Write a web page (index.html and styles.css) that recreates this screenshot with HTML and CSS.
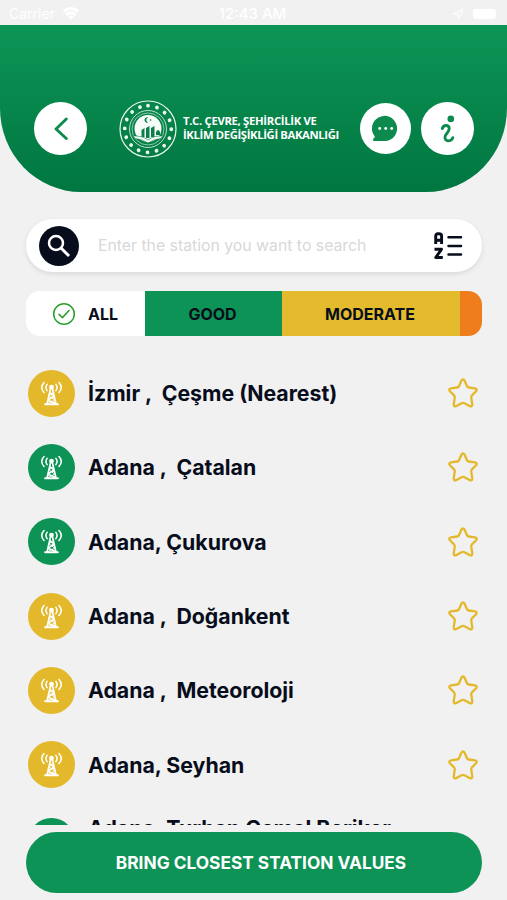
FILE: index.html
```html
<!DOCTYPE html>
<html lang="en">
<head>
<meta charset="utf-8">
<title>Stations</title>
<link rel="stylesheet" href="styles.css">
</head>
<body>
<svg class="defs" width="0" height="0" aria-hidden="true">
  <symbol id="tower" viewBox="0 0 24 26">
    <g fill="none" stroke="#fff" stroke-linecap="round" stroke-linejoin="round">
      <path stroke-width="1.600" d="M7.400 3.500Q5 6.800 7.400 10M16.600 3.500Q19 6.800 16.600 10M4.200 1.500Q-.600 6.700 4.200 12M19.800 1.500Q24.600 6.700 19.800 12"/>
      <path stroke-width="1.700" d="M11 8L7.300 24M13 8L16.700 24M10.300 12L14.500 15.500L8.500 20L16 23.500"/>
      <path stroke-width="1" d="M13.700 12L9.500 15.500L15.500 20L8 23.500"/>
      <path stroke-width="2" d="M5.300 24.300H18.700"/>
    </g>
    <circle cx="12" cy="6.300" r="2.500" fill="#fff"/>
  </symbol>
  <symbol id="star" viewBox="0 0 30 30">
    <path d="M13.500 2.500Q15 .300 16.500 2.500L18.900 8Q19.400 9.300 20.800 9.500L27 10.300Q29.700 11 28.100 13.200L23.900 17.400Q23 18.400 23.300 19.800L24.300 26.300Q24.300 29 22 28.200L16.500 25.200Q15 24.500 13.500 25.200L8 28.200Q5.700 29 5.700 26.300L6.700 19.800Q7 18.400 6.100 17.400L1.900 13.200Q.300 11 3 10.300L9.200 9.500Q10.600 9.300 11.100 8Z" fill="none" stroke="#e3b92b" stroke-width="2.300" stroke-linejoin="round"/>
  </symbol>
</svg>
<div class="status">
  <div class="status-left"><span>Carrier</span>
    <svg width="18" height="14" viewBox="0 0 18 14"><path d="M1.500 4.500Q9-1.500 16.500 4.500M4 8Q9 4 14 8" fill="none" stroke="#fff" stroke-width="2.800"/><path d="M6 9.500Q9 7.500 12 9.500L9 13Z" fill="#fff"/></svg>
  </div>
  <span class="clock">12:43 AM</span>
  <div class="status-right">
    <svg width="12" height="12" viewBox="0 0 12 12"><path d="M1 6L11 1L7 11L6 6Z" fill="none" stroke="#fff"/></svg>
    <span class="battery"></span>
  </div>
</div>
<header class="header">
  <button class="round back" aria-label="Back"><svg width="14" height="24" viewBox="0 0 14 24"><path d="M12.300 2L2 12L12.300 21.500" fill="none" stroke="#0d8a4e" stroke-width="2.900" stroke-linecap="round" stroke-linejoin="round"/></svg></button>
  <div class="brand">
    <svg width="58" height="58" viewBox="0 0 58 58">
      <g fill="none" stroke="#e8f6ee">
        <circle cx="29" cy="29" r="28" stroke-width="1.200"/>
        <circle cx="29" cy="29" r="18.500" stroke-width=".8"/>
        <circle cx="29" cy="29" r="16" stroke="#8cc9a8" stroke-width="1"/>
        <circle cx="29" cy="29" r="23.300" stroke-width="3.800" stroke-linecap="round" stroke-dasharray=".01 9.140" transform="rotate(-90 29 29)"/>
      </g>
      <circle cx="29" cy="28.500" r="13.500" fill="#f7fcf9"/>
      <path d="M29.500 17.800A2.600 2.600 0 1 0 29.500 22.200A2.200 2.200 0 1 1 29.500 17.800" fill="#0a8048"/>
      <path d="M31.500 19L32.500 20L31.500 21L30.700 20Z" fill="#0a8048"/>
      <path d="M22.500 30L25.500 28V37H22.500ZM27 28L30.500 26V38H27ZM32 28L35.500 26V37H32ZM37 32Q39 28 41 32V35H37Z" fill="#0a8048"/>
      <path d="M14 36Q23 35.500 29 40Q35 35.500 44 36L42 38.500Q35 39 29 43Q23 39 16 38.500Z" fill="#f7fcf9" stroke="#0a8048" stroke-width=".6"/>
    </svg>
    <div class="brand-name"><span class="line-one">T.C. ÇEVRE, ŞEHİRCİLİK VE</span><span class="line-two">İKLİM DEĞİŞİKLİĞİ BAKANLIĞI</span></div>
  </div>
  <button class="round chat" aria-label="Messages"><svg width="27" height="27" viewBox="0 0 27 27"><path d="M1.200 26V23.500Q2.800 23.300 2.800 21.500A12.600 12.600 0 1 1 13.800 26Z" fill="#0d8a4e"/><g fill="#fff"><circle cx="7.700" cy="13.500" r="1.400"/><circle cx="13.700" cy="13.500" r="1.400"/><circle cx="19.700" cy="13.500" r="1.400"/></g></svg></button>
  <button class="round info" aria-label="Information"><svg width="16" height="28" viewBox="0 0 16 28"><circle cx="10.800" cy="3.900" r="3.300" fill="#0d8a4e"/><path d="M2.300 13.500C3.500 9.500 9.500 9.500 9.200 13.800C9 17 5.500 19 5 22C4.500 27 11 27 12.800 22.700" fill="none" stroke="#0d8a4e" stroke-width="2.900" stroke-linecap="round"/></svg></button>
</header>
<main>
  <div class="search">
    <span class="search-icon"><svg width="24" height="24" viewBox="0 0 24 24"><circle cx="9" cy="9" r="7" fill="none" stroke="#fff" stroke-width="2.500"/><path d="M14 14L22 22" stroke="#fff" stroke-width="3"/></svg></span>
    <span class="placeholder">Enter the station you want to search</span>
    <svg class="sort" width="29" height="28" viewBox="0 0 29 28"><g fill="none" stroke="#080d1c" stroke-linejoin="round"><path stroke-width="2.900" d="M1.700 12V4Q1.700 1.800 4 1.800H5Q7.600 1.800 7.600 4V12M1.700 8.300H7.600M.500 17.300H7.500L1.700 25.500H8.800"/><path stroke-width="2.500" stroke-linecap="round" d="M14.500 5.200H27M14.500 14H27M14.500 22.500H27"/></g></svg>
  </div>
  <div class="filters">
    <div class="all"><svg width="24" height="24" viewBox="0 0 24 24"><circle cx="12" cy="12" r="10.300" fill="none" stroke="#2ca02f" stroke-width="1.500"/><path d="M7 12.300L10.500 15.500L17 8.500" fill="none" stroke="#2ca02f" stroke-width="1.600" stroke-linecap="round"/></svg><span>ALL</span></div>
    <div class="good"><span>GOOD</span></div>
    <div class="moderate"><span>MODERATE</span></div>
    <div class="sensitive"></div>
  </div>
  <div class="list">
    <div class="row"><span class="dot yellow"><svg><use href="#tower"/></svg></span><span class="name">İzmir ,  Çeşme (Nearest)</span><svg class="star"><use href="#star"/></svg></div>
    <div class="row"><span class="dot"><svg><use href="#tower"/></svg></span><span class="name">Adana ,  Çatalan</span><svg class="star"><use href="#star"/></svg></div>
    <div class="row"><span class="dot"><svg><use href="#tower"/></svg></span><span class="name">Adana, Çukurova</span><svg class="star"><use href="#star"/></svg></div>
    <div class="row"><span class="dot yellow"><svg><use href="#tower"/></svg></span><span class="name">Adana ,  Doğankent</span><svg class="star"><use href="#star"/></svg></div>
    <div class="row"><span class="dot yellow"><svg><use href="#tower"/></svg></span><span class="name">Adana ,  Meteoroloji</span><svg class="star"><use href="#star"/></svg></div>
    <div class="row"><span class="dot yellow"><svg><use href="#tower"/></svg></span><span class="name">Adana, Seyhan</span><svg class="star"><use href="#star"/></svg></div>
    <div class="row tall"><span class="dot"></span><span class="name">Adana, Turhan Cemal Beriker</span></div>
  </div>
  <button class="closest"><span>BRING CLOSEST STATION VALUES</span></button>
</main>
</body>
</html>
```

FILE: styles.css
```css
* { box-sizing: border-box; }
body { margin: 0; height: 900px; overflow: hidden; background: #f1f1f1; font-family: Inter, "Liberation Sans", sans-serif; color: #080d1c; }
button { border: 0; padding: 0; font: inherit; }
svg { display: block; flex: none; }
.defs { position: absolute; }
.status { height: 25px; padding: 2px 11px 0 9px; display: grid; grid-template-columns: 1fr auto 1fr; align-items: center; color: #fff; font-size: 14px; }
.status-left, .status-right { display: flex; align-items: center; gap: 7px; }
.status-right { justify-content: flex-end; gap: 9px; }
.clock { font-weight: 500; font-size: 15px; }
.battery { width: 23px; height: 10px; border-radius: 3px; background: #fff; }
.header { height: 167px; padding: 75px 33px 0 34px; display: flex; align-items: flex-start; background: linear-gradient(#0d9556, #007640); border-radius: 0 0 81px 81px / 0 0 84px 84px; }
.round { flex: none; width: 53px; height: 53px; margin-top: 2px; border-radius: 50%; background: #fff; display: flex; align-items: center; justify-content: center; }
.brand { display: flex; align-items: center; gap: 6px; width: 241px; margin-left: 32px; white-space: nowrap; color: #fff; font: 700 11.3px/14px "Open Sans", sans-serif; }
.brand-name { display: flex; flex-direction: column; align-items: flex-start; margin-top: -2px; }
.line-one { letter-spacing: -.32px; }
.line-two { letter-spacing: -.37px; }
.chat { width: 51px; height: 51px; margin: 3px 10px 0 0; }
main { padding: 27px 25px 0 26px; }
.search { height: 53px; padding: 0 19px 0 13px; display: flex; align-items: center; background: #fff; border-radius: 27px; box-shadow: 0 2px 5px rgba(0,0,0,.1); }
.search-icon { width: 40px; height: 40px; border-radius: 50%; background: #080d1c; display: flex; align-items: center; justify-content: center; }
.placeholder { flex: 1; margin-left: 19px; font-size: 15.8px; color: #d8d8d8; white-space: nowrap; }
.filters { height: 45px; margin-top: 19px; display: flex; border-radius: 14px; overflow: hidden; font-size: 16px; font-weight: 700; }
.filters > div { display: flex; align-items: center; justify-content: center; }
.filters .all { width: 119px; gap: 12px; padding-right: 1px; background: #fff; }
.filters .good { width: 137px; padding-right: 2px; background: #0d9355; }
.filters .moderate { width: 178px; padding-right: 2px; background: #e3bb2c; }
.filters .sensitive { flex: 1; background: #ef7d1c; }
.list { height: 489px; padding-top: 20px; overflow: hidden; }
.row { height: 74.300px; padding: 0 4px 0 2px; display: flex; align-items: center; }
.row.tall { height: 79px; }
.tall .name { padding-bottom: 27px; }
.dot { flex: none; width: 47px; height: 47px; border-radius: 50%; background: #0d9355; display: flex; align-items: center; justify-content: center; }
.yellow { background: #e3b92b; }
.dot svg { width: 23px; height: 25px; }
.name { flex: 1; margin-left: 13px; font-size: 21.300px; line-height: 26px; font-weight: 700; white-space: pre; }
.star { width: 30px; height: 30px; }
.closest { width: 100%; height: 61px; margin-top: 7px; padding-left: 14px; display: block; border-radius: 31px; background: #0d9355; color: #fff; font-size: 17.300px; font-weight: 700; text-align: center; }
```
